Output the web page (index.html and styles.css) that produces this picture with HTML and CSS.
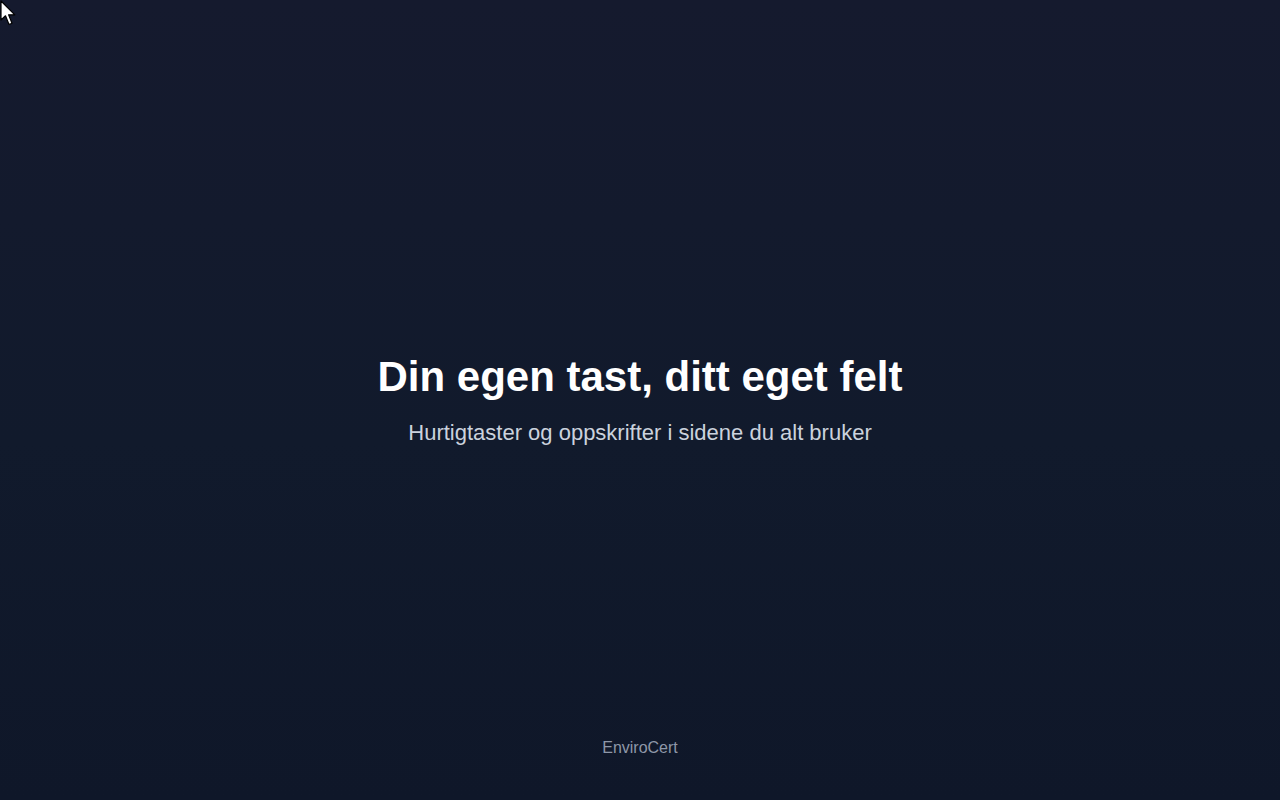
FILE: index.html
```html
<!DOCTYPE html>
<html lang="no">
<head>
    <meta charset="UTF-8">
    <meta name="viewport" content="width=device-width, initial-scale=1.0">
    <title>EnviroCert</title>
    <link rel="stylesheet" href="styles.css">
</head>
<body>
    <div class="page">
        <main class="hero">
            <h1>Din egen tast, ditt eget felt</h1>
            <p class="lead">Hurtigtaster og oppskrifter i sidene du alt bruker</p>
        </main>
        <footer class="site-footer">EnviroCert</footer>
    </div>

    <!-- musepeker fra opptaket -->
    <svg class="cursor" width="18" height="28" viewBox="0 0 18 28" aria-hidden="true">
        <path d="M1 1 L1 20 L5.5 15.8 L9 24.5 L12 23.2 L8.6 14.8 L14.8 14.8 Z" fill="#fff" stroke="#000" stroke-width="1.2" stroke-linejoin="round"/>
    </svg>
</body>
</html>
```

FILE: styles.css
```css
html, body {
    margin: 0;
    padding: 0;
}
body {
    font-family: 'Liberation Sans', Arial, Helvetica, sans-serif;
    background: linear-gradient(180deg, #151a2e 0%, #111a2c 55%, #0f1729 100%);
    color: #fff;
    min-height: 100vh;
}
.page {
    min-height: 100vh;
    display: flex;
    flex-direction: column;
}
.hero {
    flex: 1;
    display: flex;
    flex-direction: column;
    align-items: center;
    justify-content: center;
    padding-top: 88px; /* same as footer, keeps the text in the middle */
    text-align: center;
}
.hero h1 {
    margin: 0 0 15px;
    font-size: 42px;
    line-height: 50px;
    font-weight: 700;
    color: #ffffff;
}
.lead {
    margin: 0;
    font-size: 22px;
    line-height: 31px;
    color: #cbd2dd;
}
.site-footer {
    height: 88px;
    box-sizing: border-box;
    padding: 26px 0 42px;
    text-align: center;
    font-size: 16px;
    line-height: 20px;
    color: #8e97a8;
}
.cursor {
    position: absolute;
    top: 0;
    left: 0;
}
```
